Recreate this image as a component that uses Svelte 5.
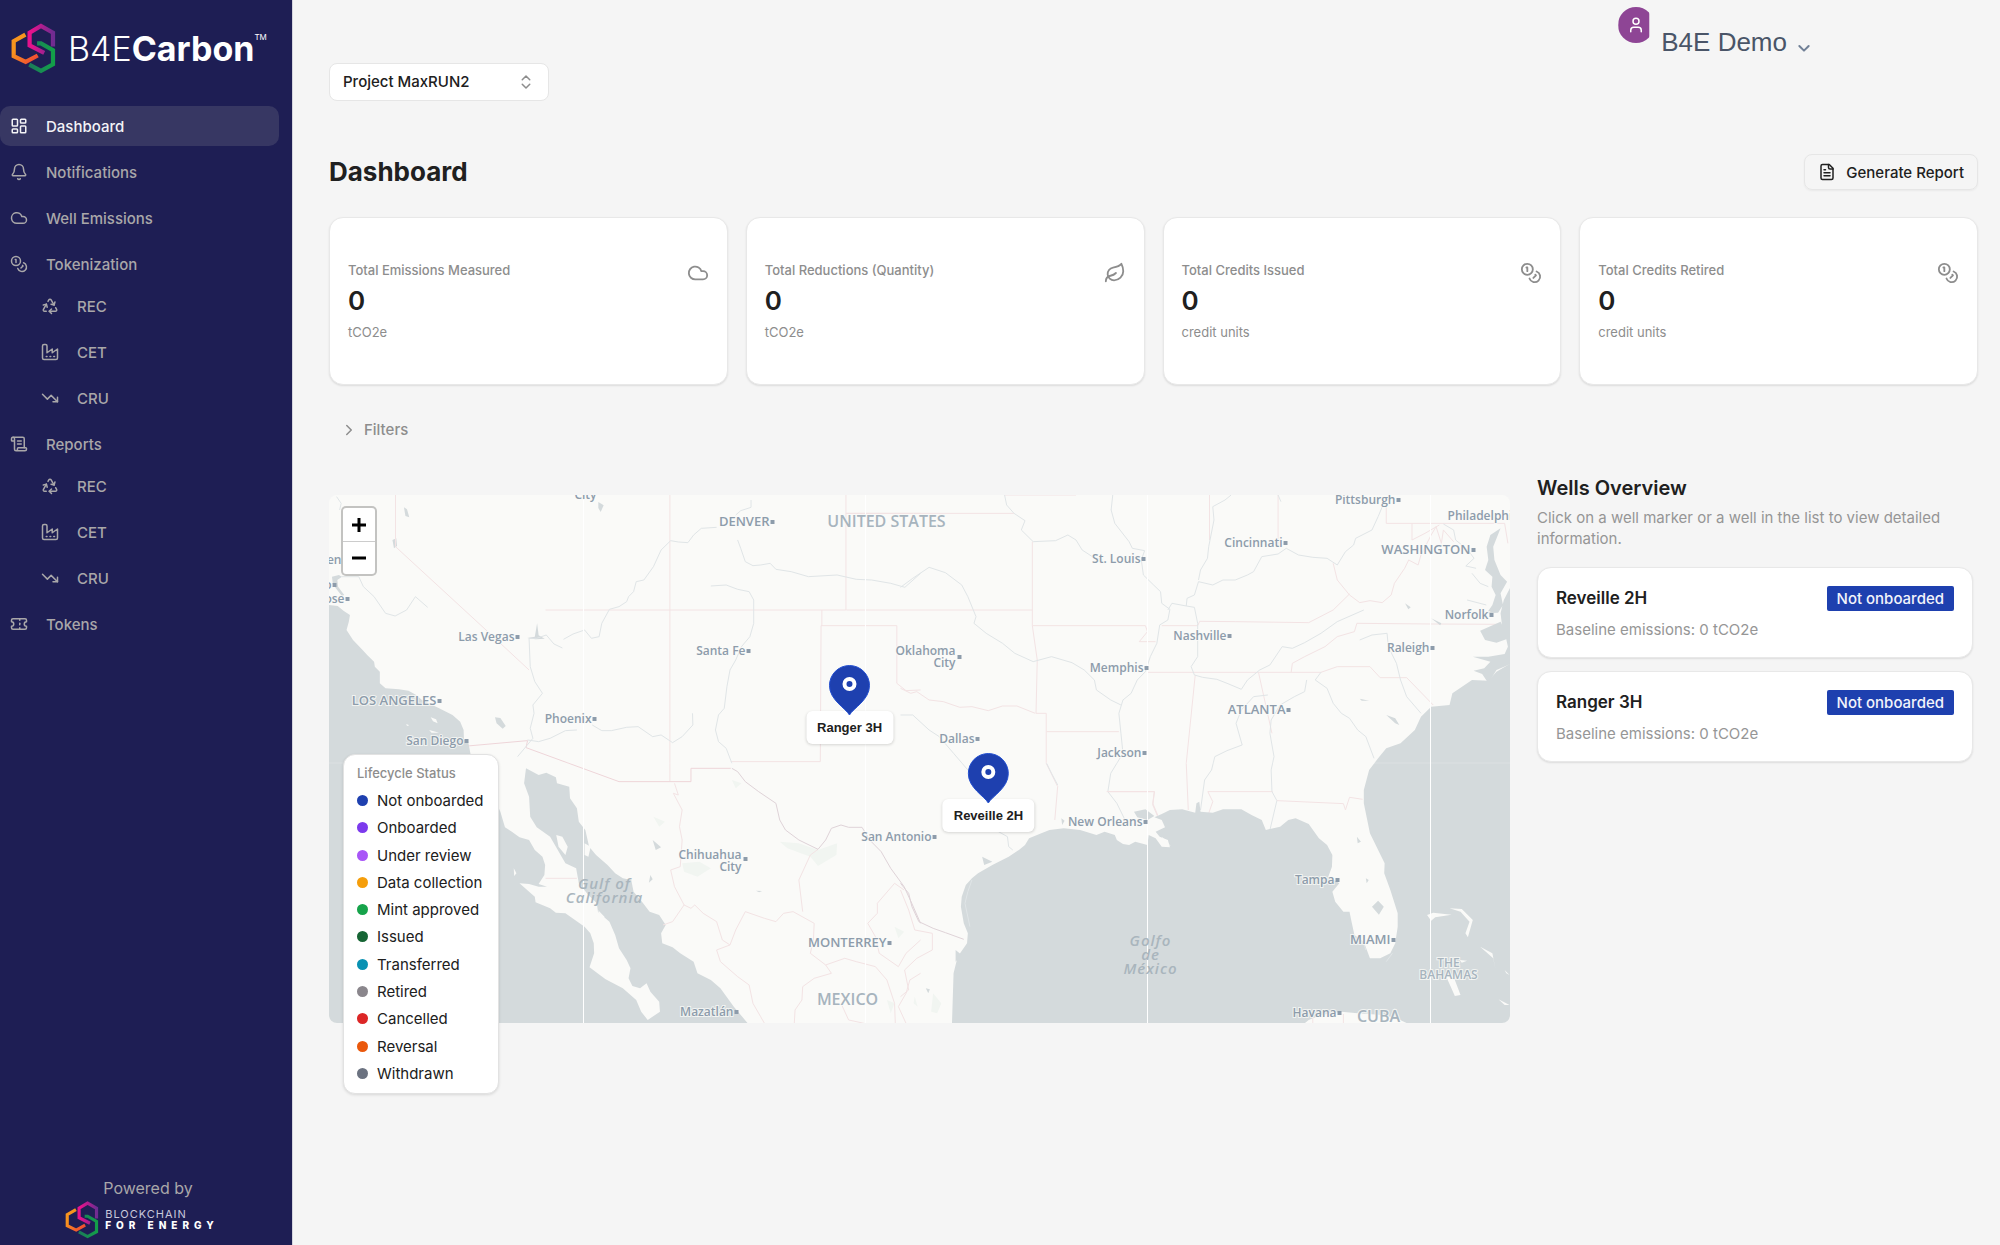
<script lang="ts">
	type NavItem = { label: string; icon: string; active?: boolean; children?: NavItem[] };

	// Lucide-style 24x24 outlines, one string per path
	const icons: Record<string, string[]> = {
		dashboard: [
			'M4 3h5a1 1 0 0 1 1 1v7a1 1 0 0 1-1 1H4a1 1 0 0 1-1-1V4a1 1 0 0 1 1-1z',
			'M15 3h5a1 1 0 0 1 1 1v3a1 1 0 0 1-1 1h-5a1 1 0 0 1-1-1V4a1 1 0 0 1 1-1z',
			'M15 12h5a1 1 0 0 1 1 1v7a1 1 0 0 1-1 1h-5a1 1 0 0 1-1-1v-7a1 1 0 0 1 1-1z',
			'M4 16h5a1 1 0 0 1 1 1v3a1 1 0 0 1-1 1H4a1 1 0 0 1-1-1v-3a1 1 0 0 1 1-1z'
		],
		bell: [
			'M10.27 21a2 2 0 0 0 3.46 0',
			'M3.26 15.33A1 1 0 0 0 4 17h16a1 1 0 0 0 .74-1.67C19.41 13.96 18 12.5 18 8A6 6 0 0 0 6 8c0 4.5-1.41 5.96-2.74 7.33'
		],
		cloud: ['M17.5 19H9a7 7 0 1 1 6.71-9h1.79a4.5 4.5 0 1 1 0 9Z'],
		coins: [
			'M14 8A6 6 0 1 1 2 8a6 6 0 0 1 12 0z',
			'M18.09 10.37A6 6 0 1 1 10.34 18',
			'M7 6h1v4',
			'm16.71 13.88.7.71-2.82 2.82'
		],
		recycle: [
			'M7 19H4.82a1.83 1.83 0 0 1-1.57-.88 1.79 1.79 0 0 1 0-1.78L7.2 9.5',
			'M11 19h8.2a1.83 1.83 0 0 0 1.56-.89 1.78 1.78 0 0 0 0-1.77l-1.23-2.12',
			'm14 16-3 3 3 3',
			'M8.29 13.6 7.2 9.5 3.1 10.6',
			'm9.34 5.81 1.1-1.89A1.83 1.83 0 0 1 11.98 3a1.78 1.78 0 0 1 1.55.89l3.94 6.84',
			'm13.38 9.63 4.1 1.1 1.1-4.1'
		],
		factory: [
			'M2 20a2 2 0 0 0 2 2h16a2 2 0 0 0 2-2V8l-7 5V8l-7 5V4a2 2 0 0 0-2-2H4a2 2 0 0 0-2 2Z',
			'M17 18h1',
			'M12 18h1',
			'M7 18h1'
		],
		trend: ['M22 17 13.5 8.5l-5 5L2 7', 'M16 17h6v-6'],
		scroll: [
			'M15 12h-5',
			'M15 8h-5',
			'M19 17V5a2 2 0 0 0-2-2H4',
			'M8 21h12a2 2 0 0 0 2-2v-1a1 1 0 0 0-1-1H11a1 1 0 0 0-1 1v1a2 2 0 1 1-4 0V5a2 2 0 1 0-4 0v2a1 1 0 0 0 1 1h3'
		],
		ticket: [
			'M2 9a3 3 0 0 1 0 6v2a2 2 0 0 0 2 2h16a2 2 0 0 0 2-2v-2a3 3 0 0 1 0-6V7a2 2 0 0 0-2-2H4a2 2 0 0 0-2 2Z',
			'M13 5v2',
			'M13 17v2',
			'M13 11v2'
		],
		leaf: [
			'M11 20A7 7 0 0 1 9.8 6.1C15.5 5 17 4.48 19 2c1 2 2 4.18 2 8 0 5.5-4.78 10-10 10Z',
			'M2 21c0-3 1.85-5.36 5.08-6C9.5 14.52 12 13 13 12'
		],
		file: [
			'M15 2H6a2 2 0 0 0-2 2v16a2 2 0 0 0 2 2h12a2 2 0 0 0 2-2V7Z',
			'M14 2v4a2 2 0 0 0 2 2h4',
			'M10 9H8',
			'M16 13H8',
			'M16 17H8'
		],
		chevrons: ['m7 15 5 5 5-5', 'm7 9 5-5 5 5'],
		right: ['m9 18 6-6-6-6'],
		down: ['m5 9 7 7 7-7'],
		user: ['M16 7A4 4 0 1 1 8 7a4 4 0 0 1 8 0z', 'M5 21v-2a4 4 0 0 1 4-4h6a4 4 0 0 1 4 4v2']
	};

	const tokenTypes: NavItem[] = [
		{ label: 'REC', icon: 'recycle' },
		{ label: 'CET', icon: 'factory' },
		{ label: 'CRU', icon: 'trend' }
	];

	const nav: NavItem[] = [
		{ label: 'Dashboard', icon: 'dashboard', active: true },
		{ label: 'Notifications', icon: 'bell' },
		{ label: 'Well Emissions', icon: 'cloud' },
		{ label: 'Tokenization', icon: 'coins', children: tokenTypes },
		{ label: 'Reports', icon: 'scroll', children: tokenTypes },
		{ label: 'Tokens', icon: 'ticket' }
	];

	const stats = [
		{ label: 'Total Emissions Measured', value: 0, unit: 'tCO2e', icon: 'cloud' },
		{ label: 'Total Reductions (Quantity)', value: 0, unit: 'tCO2e', icon: 'leaf' },
		{ label: 'Total Credits Issued', value: 0, unit: 'credit units', icon: 'coins' },
		{ label: 'Total Credits Retired', value: 0, unit: 'credit units', icon: 'coins' }
	];

	const statuses = [
		{ label: 'Not onboarded', color: '#1e40af' },
		{ label: 'Onboarded', color: '#7c3aed' },
		{ label: 'Under review', color: '#a855f7' },
		{ label: 'Data collection', color: '#f59e0b' },
		{ label: 'Mint approved', color: '#16a34a' },
		{ label: 'Issued', color: '#166534' },
		{ label: 'Transferred', color: '#0891b2' },
		{ label: 'Retired', color: '#8a868c' },
		{ label: 'Cancelled', color: '#dc2626' },
		{ label: 'Reversal', color: '#ea580c' },
		{ label: 'Withdrawn', color: '#6b7280' }
	];

	// x / y: tip of the pin on the 1182x528 map
	const wells = [
		{ name: 'Reveille 2H', status: 'Not onboarded', baseline: 0, x: 660, y: 309 },
		{ name: 'Ranger 3H', status: 'Not onboarded', baseline: 0, x: 521, y: 221 }
	];

	// Cities: right end of the label sits next to the dot
	const cities = [
		{ name: 'DENVER', x: 444, y: 27, big: true },
		{ name: 'Las Vegas', x: 189, y: 142 },
		{ name: 'LOS ANGELES', x: 111, y: 206, big: true },
		{ name: 'San Diego', x: 138, y: 246 },
		{ name: 'Phoenix', x: 266, y: 224 },
		{ name: 'Santa Fe', x: 420, y: 156 },
		{ name: 'Francisco', x: 6, y: 90 },
		{ name: 'San Jose', x: 19, y: 104 },
		{ name: 'Dallas', x: 649, y: 244 },
		{ name: 'St. Louis', x: 815, y: 64 },
		{ name: 'Cincinnati', x: 957, y: 48 },
		{ name: 'Pittsburgh', x: 1070, y: 5 },
		{ name: 'WASHINGTON', x: 1145, y: 55, big: true },
		{ name: 'Norfolk', x: 1163, y: 120 },
		{ name: 'Raleigh', x: 1104, y: 153 },
		{ name: 'Nashville', x: 901, y: 141 },
		{ name: 'Memphis', x: 818, y: 173 },
		{ name: 'ATLANTA', x: 960, y: 215, big: true },
		{ name: 'Jackson', x: 816, y: 258 },
		{ name: 'New Orleans', x: 817, y: 327 },
		{ name: 'San Antonio', x: 606, y: 342 },
		{ name: 'Tampa', x: 1009, y: 385 },
		{ name: 'MIAMI', x: 1065, y: 445, big: true },
		{ name: 'Havana', x: 1011, y: 518 },
		{ name: 'MONTERREY', x: 561, y: 448, big: true },
		{ name: 'Mazatlán', x: 408, y: 517 }
	];

	let project = $state('Project MaxRUN2');
	let filtersOpen = $state(false);
</script>

{#snippet icon(name: string, size = 18, weight = 2)}
	<svg class="icon" width={size} height={size} viewBox="0 0 24 24" stroke-width={weight} aria-hidden="true">
		{#each icons[name] as d}
			<path {d} />
		{/each}
	</svg>
{/snippet}

{#snippet hexMark(id: string, width: number, height: number)}
	<svg class="hex" {width} {height} viewBox="32 67 138 157" aria-hidden="true">
		<defs>
			<linearGradient id="{id}-o" x1="0" y1="0" x2="1" y2="1">
				<stop offset="0.3" stop-color="#f7941e" />
				<stop offset="1" stop-color="#ef4136" />
			</linearGradient>
			<linearGradient id="{id}-p" x1="0" y1="0" x2="1" y2="0">
				<stop offset="0.1" stop-color="#e5128c" />
				<stop offset="1" stop-color="#6f2c91" />
			</linearGradient>
			<linearGradient id="{id}-g" x1="0" y1="0" x2="1" y2="0">
				<stop offset="0" stop-color="#1b7a5a" />
				<stop offset="1" stop-color="#139f49" />
			</linearGradient>
		</defs>
		<path d="M76 103 40 123V169L77 187 114 167" stroke="url(#{id}-o)" />
		<path d="M134 159 89 136V97L124 76 161 97V139" stroke="url(#{id}-p)" />
		<path d="M112 130 124 130 161 151V194L124 214 88 195" stroke="url(#{id}-g)" />
	</svg>
{/snippet}

{#snippet navLink(item: NavItem)}
	<a class="nav-link" class:active={item.active} href="#{item.label.toLowerCase()}">
		{@render icon(item.icon)}
		<span>{item.label}</span>
	</a>
{/snippet}

<div class="app">
	<aside class="sidebar">
		<div class="brand">
			{@render hexMark('brand', 45, 51)}
			<span class="brand-name">B4E<b>Carbon</b></span>
			<span class="brand-tm">TM</span>
		</div>

		<nav>
			<ul class="nav-list">
				{#each nav as item}
					<li>
						{@render navLink(item)}
						{#if item.children}
							<ul class="nav-list nav-sub">
								{#each item.children as child}
									<li>{@render navLink(child)}</li>
								{/each}
							</ul>
						{/if}
					</li>
				{/each}
			</ul>
		</nav>

		<div class="powered">
			<span>Powered by</span>
			<div class="powered-brand">
				{@render hexMark('powered', 34, 38)}
				<div class="powered-name">
					<span>BLOCKCHAIN</span>
					<b>FOR ENERGY</b>
				</div>
			</div>
		</div>
	</aside>

	<main>
		<header class="topbar">
			<div class="project">
				<select aria-label="Project" bind:value={project}>
					<option>Project MaxRUN2</option>
				</select>
				{@render icon('chevrons', 18, 2)}
			</div>
			<button class="user">
				<span class="avatar">{@render icon('user', 18, 2)}</span>
				<span class="user-name">B4E Demo</span>
				{@render icon('down', 16, 3)}
			</button>
		</header>

		<div class="page-head">
			<h1>Dashboard</h1>
			<button class="report">
				{@render icon('file', 18)}
				Generate Report
			</button>
		</div>

		<section class="stats">
			{#each stats as s}
				<article class="card stat">
					<div>
						<div class="stat-label">{s.label}</div>
						<div class="stat-value">{s.value}</div>
						<div class="stat-unit">{s.unit}</div>
					</div>
					{@render icon(s.icon, 22)}
				</article>
			{/each}
		</section>

		<button class="filters" aria-expanded={filtersOpen} onclick={() => (filtersOpen = !filtersOpen)}>
			{@render icon('right', 18)}
			Filters
		</button>

		<div class="overview">
			<div class="map">
				<svg class="map-canvas" viewBox="0 0 1182 528" preserveAspectRatio="xMidYMid slice" role="img" aria-label="Map of wells">
					<rect width="1182" height="528" fill="#fafaf8" />

					<!-- north west -->
					<g transform="translate(-8 -15) scale(0.3827 0.3333)">
						<path class="water" d="M22 375 45 378 60 392 77 405 74 425 68 450 85 480 110 510 122 525 140 545 142 560 155 575 155 610 170 625 205 628 230 632 250 645 265 660 310 685 345 705 365 725 374 750 375 785 390 820 400 960H22Z" />
						<path class="water" d="M30 290 48 285 56 290 44 300 46 320 62 345 56 348 40 325 32 310Z M188 180 198 175 200 198 192 205Z M218 82 226 88 232 112 222 108Z M456 712 470 714 484 738 476 746 460 730Z M726 66 740 76 732 96 726 84Z M540 474 560 470 566 430 570 466 586 476 562 478Z" />
						<path class="land" d="M288 712 302 718 306 730 294 724Z M284 750 310 758 290 758Z M224 732 232 736 226 738Z" />
						<path class="border" d="M196 45V200L440 458 545 570M588 390H1373M913 45V905M1373 45V390M1373 100H1568M1310 390V437M1308 437H1506V610L1530 632 1568 630M1308 437 1306 845H1072" />
						<path class="border strong" d="M1072 865H968V905H780L537 803 541 782 385 798" />
						<path class="river" d="M1125 60V82L1098 92 1085 105M1035 142 995 145 975 165 960 188 935 186 915 182 890 210 870 260 845 300 825 305 818 335 805 350 800 365 780 380 755 388 735 430 728 470 708 475 690 450 660 462 635 478M632 504 610 492 590 465 565 475 545 475 548 560 560 605 580 640 555 675 558 700 548 745 555 775 515 830" />
						<path class="river" d="M1090 180 1098 205 1110 245 1130 257 1150 255 1175 250 1190 268 1230 275 1275 290 1350 285 1400 298 1440 300 1490 310 1527 322 1568 280" />
						<path class="river" d="M1020 318 1060 315 1090 328 1120 335 1132 360 1132 430 1122 470 1100 500 1085 540 1070 570 1062 620 1055 685 1040 705 1032 750 1040 785 1060 805 1075 850" />
						<path class="river" d="M541 780 570 785 600 775 640 752 670 750M710 735 735 752 760 752 800 742 830 740 868 770 890 765 920 788 945 770 973 735 972 700M55 290 100 290 112 320 140 350 170 400 195 408 225 390 248 350 280 382M42 50 54 70 50 90" />
					</g>

					<!-- north east -->
					<g transform="translate(572 -15) scale(0.4082 0.3333)">
						<path class="border" d="M-133 100H278M255 45H430M-133 390H323M323 185V437L335 540 332 700H357V850L385 920 378 1020M323 437H600L605 455 585 485H625M640 437H728L733 424 820 425 1000 428 1060 390 1100 342M757 45V180M925 45V200M1190 80V130H1480L1488 190M1253 130V180L1285 160 1320 135M1118 430 1300 432 1470 433M1118 430 1112 455 1070 470 1040 500 990 530 960 550 957 577M605 577H1030L1070 560H1150L1175 593H1240L1305 675M722 585 700 850 705 990M877 577 910 760M358 755H535M510 935H622L618 975 632 1015M755 1000 765 965 753 935H912M922 962 1085 971 1090 990 1100 952 1132 958" />
						<path class="border" d="M0 625 25 640 40 635 70 660 105 665 145 682 175 680 215 692 250 678 285 678 330 700M1060 250 1070 300 1100 345 1125 368 1150 362 1180 368 1202 345 1210 310 1235 265 1245 240 1268 255 1275 225 1300 165 1312 140 1325 190 1330 150 1355 185" />
						<path class="river" d="M255 45 260 75 278 100 305 122 296 150 325 185 380 182 410 165 430 180 445 210 470 230 495 240M520 45 516 90 525 130 560 185 568 205 598 212 590 240 595 285 620 315 637 335 640 370 660 388 655 420 635 435 628 490 612 530 600 575 580 600 565 640 545 660 535 700 540 760 545 820 515 880 508 935 530 970 550 1020" />
						<path class="river" d="M700 378 665 370 655 390M720 345 702 355 700 378 720 382 728 430 728 530 712 560 720 585 740 592 775 598 800 610 835 628 850 600 880 570 905 555 935 500 960 505 990 488 1030 460 1070 425 1135 390M720 345 730 305 765 315 790 300 820 300 850 285 865 275 885 230 925 222 945 205 975 225 1010 232 1045 235 1070 255 1090 215 1110 195 1115 175 1155 150 1170 110 1182 75" />
						<path class="river" d="M810 45 795 60 765 80 768 120 755 200 752 235 735 270 730 300M925 45 932 65M0 322 30 295 70 262 110 278 150 315 165 350 185 410 180 430 210 460 250 490 280 520 325 545 370 530 420 548 450 570 475 600 480 630 515 660 540 675M0 705 30 705 70 750 95 770 130 820 165 870" />
						<path class="river" d="M1030 577 1016 600 1045 625 1060 670 1080 700 1100 715 1120 750 1140 770 1160 835M995 600 990 635 965 650 930 675 908 720 905 760 915 830 908 870 910 935 922 962 905 1050M900 645 865 650 835 690 822 730 837 795 800 812 770 830 762 870 745 900 735 990M1125 480 1155 465 1192 460 1195 500 1215 550 1225 600 1240 650 1275 700M1330 132 1355 150 1360 180 1390 210 1405 235 1385 258 1410 265M1400 280 1420 310 1440 320M1388 360 1435 375M358 850 370 880 385 915" />
						<path class="water" d="M1495 320 1478 360 1470 400 1474 440 1492 500 1495 500Z M1470 145 1445 165 1436 200 1440 240 1432 270 1450 290 1448 320 1458 345 1450 375 1436 400 1464 398 1476 375 1470 340 1486 305 1470 285 1455 240 1452 200Z M1420 452 1432 480 1460 488 1484 478 1488 500 1480 522 1440 530 1402 530 1445 545 1430 565 1404 572 1425 582 1440 610 1460 570 1495 552V490L1470 425Z M1190 705 1212 715 1222 735 1212 730Z M1300 415 1325 430 1322 436Z M1236 370 1250 382 1244 388Z M1125 656 1148 662 1130 662Z" />
					</g>

					<!-- south west -->
					<g transform="translate(-8 245) scale(0.3827 0.3333)">
						<path class="water" d="M22 0 385 0 395 60 440 140 470 215 482 262 500 275 520 292 545 300 560 330 580 350 587 375 585 405 570 432 592 440 570 440 545 432 520 430 540 450 560 470 562 487 600 505 615 518 640 520 665 540 690 560 705 580 714 610 715 640 703 682 730 705 745 718 790 745 825 780 838 815 855 840 887 815 885 785 862 755 852 730 835 745 815 738 805 715 810 685 800 660 780 625 770 585 755 545 725 515 722 490 700 465 675 430 668 385 640 370 600 290 565 262 548 230 545 170 532 130 537 85 570 105 590 98 615 112 618 130 650 140 652 175 670 205 675 245 692 270 702 320 720 345 750 375 770 400 790 415 812 420 818 455 840 485 860 515 885 525 902 555 890 580 893 610 920 622 940 640 975 665 985 700 1020 720 1045 745 1080 800 1120 855H22Z" />
						<path class="land" d="M616 285 632 290 646 320 640 345 622 320Z M690 310 706 320 700 350 690 345Z M505 385 512 400 506 408Z M725 510 742 530 738 545Z" />
						<path class="water" d="M868 300 890 322 876 330Z M1138 452 1154 453 1146 457Z M862 405 868 418 858 428Z" />
						<path class="park" d="M1200 305 1250 310 1300 330 1350 310 1348 345 1300 378 1280 350 1220 325Z M945 370 990 365 1020 385 985 410 950 395Z M1075 120 1100 130 1085 145Z M870 230 900 245 885 260Z M1500 560 1525 575 1510 595Z M1480 780 1500 790 1490 820Z" />
						<path class="border" d="M588 415H670M925 130 935 165 922 160 945 210 938 260 945 300 940 380 915 390 925 440 950 495 920 545 895 555M950 495 968 505 978 495 1000 520 1035 545 1050 600 1070 615 1085 570 1110 515 1160 535 1190 545 1210 520 1235 515 1290 550 1288 600 1280 640 1320 675 1370 655 1400 665 1450 680 1480 720 1500 790 1502 850M1070 615 1035 630 1045 665 1090 710 1120 735 1130 790 1150 830 1160 850M1320 675 1335 700 1290 715 1260 740 1258 780 1240 810 1238 850M1260 515 1250 420 1280 345 1300 328M1430 550 1455 520 1455 490 1500 430 1525 450M1430 550 1450 590 1460 640 1510 680 1530 640 1568 600M1360 790 1380 840 1420 850M1568 700 1540 720 1530 760 1510 800 1530 850" />
						<path class="river main" d="M1075 85 1090 95 1110 125 1145 155 1190 190 1200 240 1215 270 1250 300 1300 328 1320 300 1335 265 1360 255 1380 262 1415 262 1435 300 1465 335 1490 385 1525 440 1545 490 1568 550" />
					</g>

					<!-- south east -->
					<g transform="translate(572 245) scale(0.4082 0.3333)">
						<path class="water" d="M126 855 130 700 140 650 163 610 165 580 155 550 148 500 150 470 160 435 175 415 190 400 225 375 265 350 290 330 305 315 315 295 345 280 365 270 400 265 440 270 480 285 500 275 525 285 530 300 545 312 560 315 575 305 605 315 608 285 625 295 640 320 660 322 655 300 635 290 625 275 648 262 640 240 622 232 640 222 660 210 690 208 722 218 725 190 732 185 735 215 765 218 790 208 835 208 860 225 885 240 895 270 930 260 950 240 968 235 1000 252 1025 295 1045 315 1058 345 1057 380 1048 410 1075 430 1058 455 1065 485 1085 515 1100 515 1105 545 1112 585 1135 605 1150 655 1175 655 1200 640 1212 610 1218 560 1218 520 1200 450 1185 400 1186 370 1150 280 1135 190 1135 150 1148 90 1170 55 1190 25 1225 10 1260 -30 1275 -70 1300 -100 1345 -105 1352 -140 1400 -180 1440 -178 1460 -205 1495 -230V855Z" />
						<path class="water" d="M572 215 600 208 622 228 605 240 580 232Z M1155 500 1170 482 1184 500 1172 524Z M1118 290 1128 305 1120 310Z M394 235 402 242 396 255Z M135 630 150 645 135 665Z M62 745 72 748 68 760Z M1140 415 1147 420 1142 430Z M200 350 225 365 205 375Z" />
						<path class="land" d="M985 855 1000 840 1030 825 1080 815 1120 820 1180 825 1215 835 1250 855Z M1290 525 1305 518 1350 524 1310 532 1300 542Z M1345 505 1375 507 1402 540 1390 592 1384 580 1394 545 1372 515Z M1335 705 1358 720 1372 765 1358 768 1348 740Z M1420 620 1450 640 1458 690 1452 655Z M1480 690 1492 705 1484 700Z M1465 778 1492 795 1480 795Z M640 290 662 318 645 308Z M1370 660 1388 662 1375 668Z" />
						<path class="park" d="M80 760 100 790 90 820 75 815Z M35 770 42 800 32 790Z" />
						<path class="border" d="M0 450 20 510 35 570 78 580V630L40 655 10 690 20 750 0 770M505 155H622L618 190 630 225M1010 830V850M1085 822V850" />
						<path class="river main" d="M0 430 20 460 28 500 45 545 80 565 110 578 155 598" />
						<path class="river" d="M240 275 262 290 265 320 275 330M1135 610 1140 630M1190 665 1205 640M175 420 165 455 158 490 170 560" />
					</g>

					<!-- tile seams -->
					<path class="seam" d="M255 0V528M537 0V528M819 0V528M1102 0V528" />
					<path class="seam faint" d="M0 268H1182" />

					<g class="labels">
						{#each cities as c}
							<rect x={c.x - 2} y={c.y - 2} width="4" height="4" />
							<text class:big={c.big} x={c.x - 3} y={c.y + 4} text-anchor="end">{c.name}</text>
						{/each}
						<text x="13" y="69" text-anchor="end">Sacramen</text>
						<text x="268" y="4" text-anchor="end">City</text>
						<text x="1119" y="25">Philadelphia</text>
						<text x="627" y="160" text-anchor="end">Oklahoma</text>
						<text x="627" y="172" text-anchor="end">City</text>
						<rect x="629" y="160" width="4" height="4" />
						<text x="413" y="364" text-anchor="end">Chihuahua</text>
						<text x="413" y="376" text-anchor="end">City</text>
						<rect x="415" y="362" width="4" height="4" />
						<g class="country" text-anchor="middle">
							<text x="558" y="32">UNITED STATES</text>
							<text x="519" y="510">MEXICO</text>
							<text x="1050" y="527">CUBA</text>
							<text class="small" x="1120" y="472">THE</text>
							<text class="small" x="1120" y="484">BAHAMAS</text>
						</g>
						<g class="sea" text-anchor="middle">
							<text x="276" y="394">Gulf of</text>
							<text x="276" y="408">California</text>
							<text x="822" y="451">Golfo</text>
							<text x="822" y="465">de</text>
							<text x="822" y="479">México</text>
						</g>
					</g>
				</svg>

				<div class="zoom">
					<button aria-label="Zoom in"><svg width="16" height="16" viewBox="0 0 16 16"><path d="M8 1V15M1 8H15" /></svg></button>
					<button aria-label="Zoom out"><svg width="16" height="16" viewBox="0 0 16 16"><path d="M1 8H15" /></svg></button>
				</div>

				{#each wells as w}
					<button class="marker" style="left: {(w.x / 1182) * 100}%; top: {(w.y / 528) * 100}%">
						<span class="marker-label">{w.name}</span>
						<svg class="pin" width="42" height="51" viewBox="0 0 42 51" aria-hidden="true">
							<path d="M21 50C17 43 1 35 1 20.5a20 20 0 0 1 40 0C41 35 25 43 21 50Z" />
							<circle cx="21" cy="19" r="5" />
						</svg>
					</button>
				{/each}

				<div class="legend">
					<div class="legend-title">Lifecycle Status</div>
					<ul>
						{#each statuses as s}
							<li><span class="dot" style="background: {s.color}"></span>{s.label}</li>
						{/each}
					</ul>
				</div>
			</div>

			<section class="wells">
				<h2>Wells Overview</h2>
				<p>Click on a well marker or a well in the list to view detailed information.</p>
				{#each wells as w}
					<article class="card well">
						<div class="well-head">
							<h3>{w.name}</h3>
							<span class="badge">{w.status}</span>
						</div>
						<div class="well-info">Baseline emissions: {w.baseline} tCO2e</div>
					</article>
				{/each}
			</section>
		</div>
	</main>
</div>

<style>
	:global(body) {
		background: #f5f5f5;
	}

	.app {
		--muted: #8d8d8d;
		--ink: #202020;
		--blue: #1e40af;
		display: flex;
		min-height: 100vh;
		font-family: Inter, 'Liberation Sans', sans-serif;
		font-size: 15px;
		line-height: 21px;
		color: var(--ink);
	}

	.app :global(*) {
		box-sizing: border-box;
	}

	button,
	select {
		font: inherit;
		color: inherit;
		border: 0;
		background: none;
		padding: 0;
		cursor: pointer;
	}

	ul {
		list-style: none;
		margin: 0;
		padding: 0;
	}

	h1,
	h2,
	h3,
	p {
		margin: 0;
	}

	.icon {
		flex: none;
		fill: none;
		stroke: currentColor;
		stroke-linecap: round;
		stroke-linejoin: round;
	}

	.sidebar {
		flex: none;
		width: 293px;
		display: flex;
		flex-direction: column;
		background: #1e1e54;
		border-right: 1px solid #d5d5de;
		color: #a9a7a9;
	}

	.brand {
		display: flex;
		align-items: center;
		padding: 23px 0 0 11px;
		color: #fff;
	}

	.hex {
		flex: none;
		fill: none;
		stroke-width: 13;
	}

	.brand-name {
		margin-left: 12px;
		font-size: 34px;
		line-height: 50px;
		font-weight: 300;
	}

	.brand-name b {
		font-weight: 700;
	}

	.brand-tm {
		align-self: flex-start;
		font-size: 8px;
		line-height: 29px;
	}

	nav {
		padding: 32px 13px 0 0;
	}

	.nav-list {
		display: flex;
		flex-direction: column;
		gap: 6px;
	}

	.nav-sub {
		margin-top: 2px;
	}

	.nav-link {
		display: flex;
		align-items: center;
		gap: 18px;
		height: 40px;
		padding-left: 10px;
		border-radius: 10px;
		color: inherit;
		font-weight: 500;
		text-decoration: none;
	}

	.nav-sub .nav-link {
		padding-left: 41px;
	}

	.nav-link.active {
		background: #373763;
		color: #f3f3f6;
	}

	.powered {
		margin-top: auto;
		padding: 0 0 6px 4px;
		display: flex;
		flex-direction: column;
		align-items: center;
		font-size: 16px;
	}

	.powered > span {
		line-height: 22px;
	}

	.powered-brand {
		display: flex;
		align-items: center;
		gap: 6px;
		margin: 2px 12px 0 0;
	}

	.powered-name {
		font-size: 11px;
		line-height: 11px;
		display: flex;
		flex-direction: column;
		letter-spacing: 1px;
		color: #c9c9dc;
	}

	.powered-name b {
		font-size: 10px;
		color: #fff;
		font-weight: 800;
		letter-spacing: 5px;
	}

	main {
		flex: 1;
		min-width: 0;
		padding: 0 22px 40px 36px;
	}

	.topbar {
		display: flex;
		justify-content: space-between;
		align-items: flex-start;
		height: 101px;
	}

	.project {
		position: relative;
		margin-top: 63px;
		width: 220px;
	}

	.project select {
		appearance: none;
		width: 100%;
		height: 38px;
		padding: 0 40px 2px 13px;
		border: 1px solid #e6e6e6;
		border-radius: 8px;
		background: #fff;
		font-weight: 500;
	}

	.project .icon {
		position: absolute;
		right: 14px;
		top: 10px;
		color: var(--muted);
		pointer-events: none;
	}

	.user {
		display: flex;
		align-items: flex-start;
		margin: 7px 166px 0 0;
		color: #4a5568;
		font-family: 'Liberation Sans', Arial, sans-serif;
		font-size: 26px;
		line-height: 30px;
	}

	.avatar {
		display: grid;
		place-items: center;
		width: 36px;
		height: 36px;
		margin-right: -5px;
		border-radius: 50%;
		clip-path: inset(0 5px 0 0);
		background: #8e4595;
		color: #fff;
	}

	.user-name {
		margin: 20px 9px 0 12px;
	}

	.user > .icon {
		margin-top: 33px;
		color: #718096;
	}

	.page-head {
		display: flex;
		justify-content: space-between;
		align-items: center;
		margin-top: 53px;
	}

	h1 {
		font-size: 26px;
		line-height: 36px;
		font-weight: 700;
	}

	.report {
		display: flex;
		align-items: center;
		gap: 10px;
		height: 36px;
		padding: 0 13px;
		border: 1px solid #e6e6e6;
		border-radius: 8px;
		box-shadow: 0 1px 2px rgba(0, 0, 0, 0.05);
		font-weight: 500;
	}

	.card {
		background: #fff;
		border: 1px solid #e8e8e8;
		border-radius: 14px;
		box-shadow: 0 1px 2px rgba(0, 0, 0, 0.1);
	}

	.stats {
		display: grid;
		grid-template-columns: repeat(4, 1fr);
		gap: 18px;
		margin-top: 27px;
	}

	.stat {
		display: flex;
		justify-content: space-between;
		padding: 42px 18px;
		color: var(--muted);
	}

	.stat .icon {
		margin-top: 2px;
	}

	.stat-label,
	.stat-unit {
		font-size: 13px;
		line-height: 20px;
	}

	.stat-label {
		font-weight: 500;
	}

	.stat-value {
		margin: 6px 0;
		font-size: 26px;
		line-height: 30px;
		font-weight: 600;
		color: var(--ink);
	}

	.filters {
		display: flex;
		align-items: center;
		gap: 6px;
		margin: 34px 0 0 11px;
		font-weight: 500;
		color: var(--muted);
	}

	.overview {
		display: grid;
		grid-template-columns: minmax(0, 1fr) 441px;
		gap: 27px;
		align-items: start;
		margin-top: 35px;
	}

	.map {
		position: relative;
		height: 528px;
		margin-top: 20px;
	}

	.map-canvas {
		display: block;
		width: 100%;
		height: 100%;
		border-radius: 8px;
	}

	.water {
		fill: #d4dadc;
	}

	.land {
		fill: #fafaf8;
	}

	.park {
		fill: #f1f5f1;
	}

	.border,
	.river {
		fill: none;
		stroke: #f3e3e4;
		vector-effect: non-scaling-stroke;
	}

	.border.strong {
		stroke: #eed5d9;
	}

	.river {
		stroke: #e0e5e7;
	}

	.river.main {
		stroke: #dfd3d8;
	}

	.seam {
		stroke: #fff;
	}

	.seam.faint {
		opacity: 0.2;
	}

	.labels {
		font-family: 'Open Sans', 'Noto Sans', sans-serif;
		font-size: 12px;
		font-weight: 600;
		fill: #8d9cab;
	}

	.labels text {
		stroke: #fafaf8;
		stroke-opacity: 0.8;
		stroke-width: 2px;
		paint-order: stroke;
	}

	.labels .big {
		font-size: 13px;
	}

	.labels .country {
		font-size: 16px;
		fill: #a7b4be;
	}

	.labels .country .small {
		font-size: 12px;
	}

	.labels .sea {
		font-size: 15px;
		font-style: italic;
		letter-spacing: 1px;
		fill: #a9b5bd;
	}

	.labels .sea text {
		stroke: none;
	}

	.zoom {
		position: absolute;
		left: 12px;
		top: 11px;
		width: 36px;
		border: 2px solid rgba(0, 0, 0, 0.22);
		border-radius: 5px;
		background: #fff;
		background-clip: padding-box;
	}

	.zoom button {
		display: grid;
		place-items: center;
		width: 100%;
		height: 33px;
	}

	.zoom button + button {
		border-top: 1px solid #ccc;
	}

	.zoom path {
		stroke: #000;
		stroke-width: 3;
	}

	.marker {
		position: absolute;
		transform: translate(-50%, -51px);
		display: flex;
		flex-direction: column-reverse;
		align-items: center;
	}

	.pin {
		position: relative;
		z-index: 1;
		fill: var(--blue);
		stroke: #2450d0;
	}

	.pin circle {
		stroke: #fff;
		stroke-width: 4;
	}

	.marker-label {
		margin-top: -5px;
		padding: 6px 11px;
		border-radius: 6px;
		background: #fff;
		box-shadow: 0 1px 3px rgba(0, 0, 0, 0.15);
		font-family: 'Liberation Sans', Arial, sans-serif;
		font-size: 13px;
		font-weight: 700;
		white-space: nowrap;
	}

	.legend {
		position: absolute;
		left: 14px;
		top: 259px;
		bottom: -71px;
		display: flex;
		flex-direction: column;
		padding: 8px 14px 9px 13px;
		background: #fff;
		border: 1px solid #e2e2e2;
		border-radius: 12px;
		box-shadow: 0 1px 3px rgba(0, 0, 0, 0.12);
	}

	.legend-title {
		font-size: 13px;
		font-weight: 500;
		color: var(--muted);
	}

	.legend ul {
		flex: 1;
		display: flex;
		flex-direction: column;
		justify-content: space-between;
		margin-top: 6px;
	}

	.legend li {
		display: flex;
		align-items: center;
		gap: 9px;
	}

	.dot {
		width: 11px;
		height: 11px;
		border-radius: 50%;
	}

	.wells {
		padding-right: 5px;
	}

	h2 {
		font-size: 20px;
		line-height: 26px;
		font-weight: 600;
	}

	.wells p {
		margin: 6px 0 18px;
		color: #969696;
	}

	.well {
		padding: 17px 18px;
	}

	.well + .well {
		margin-top: 13px;
	}

	.well-head {
		display: flex;
		justify-content: space-between;
		align-items: center;
	}

	h3 {
		font-size: 17px;
		line-height: 27px;
		font-weight: 600;
	}

	.badge {
		padding: 2px 10px;
		border-radius: 2px;
		background: var(--blue);
		color: #f2f4fb;
		font-weight: 500;
	}

	.well-info {
		margin-top: 7px;
		color: #969696;
	}
</style>
